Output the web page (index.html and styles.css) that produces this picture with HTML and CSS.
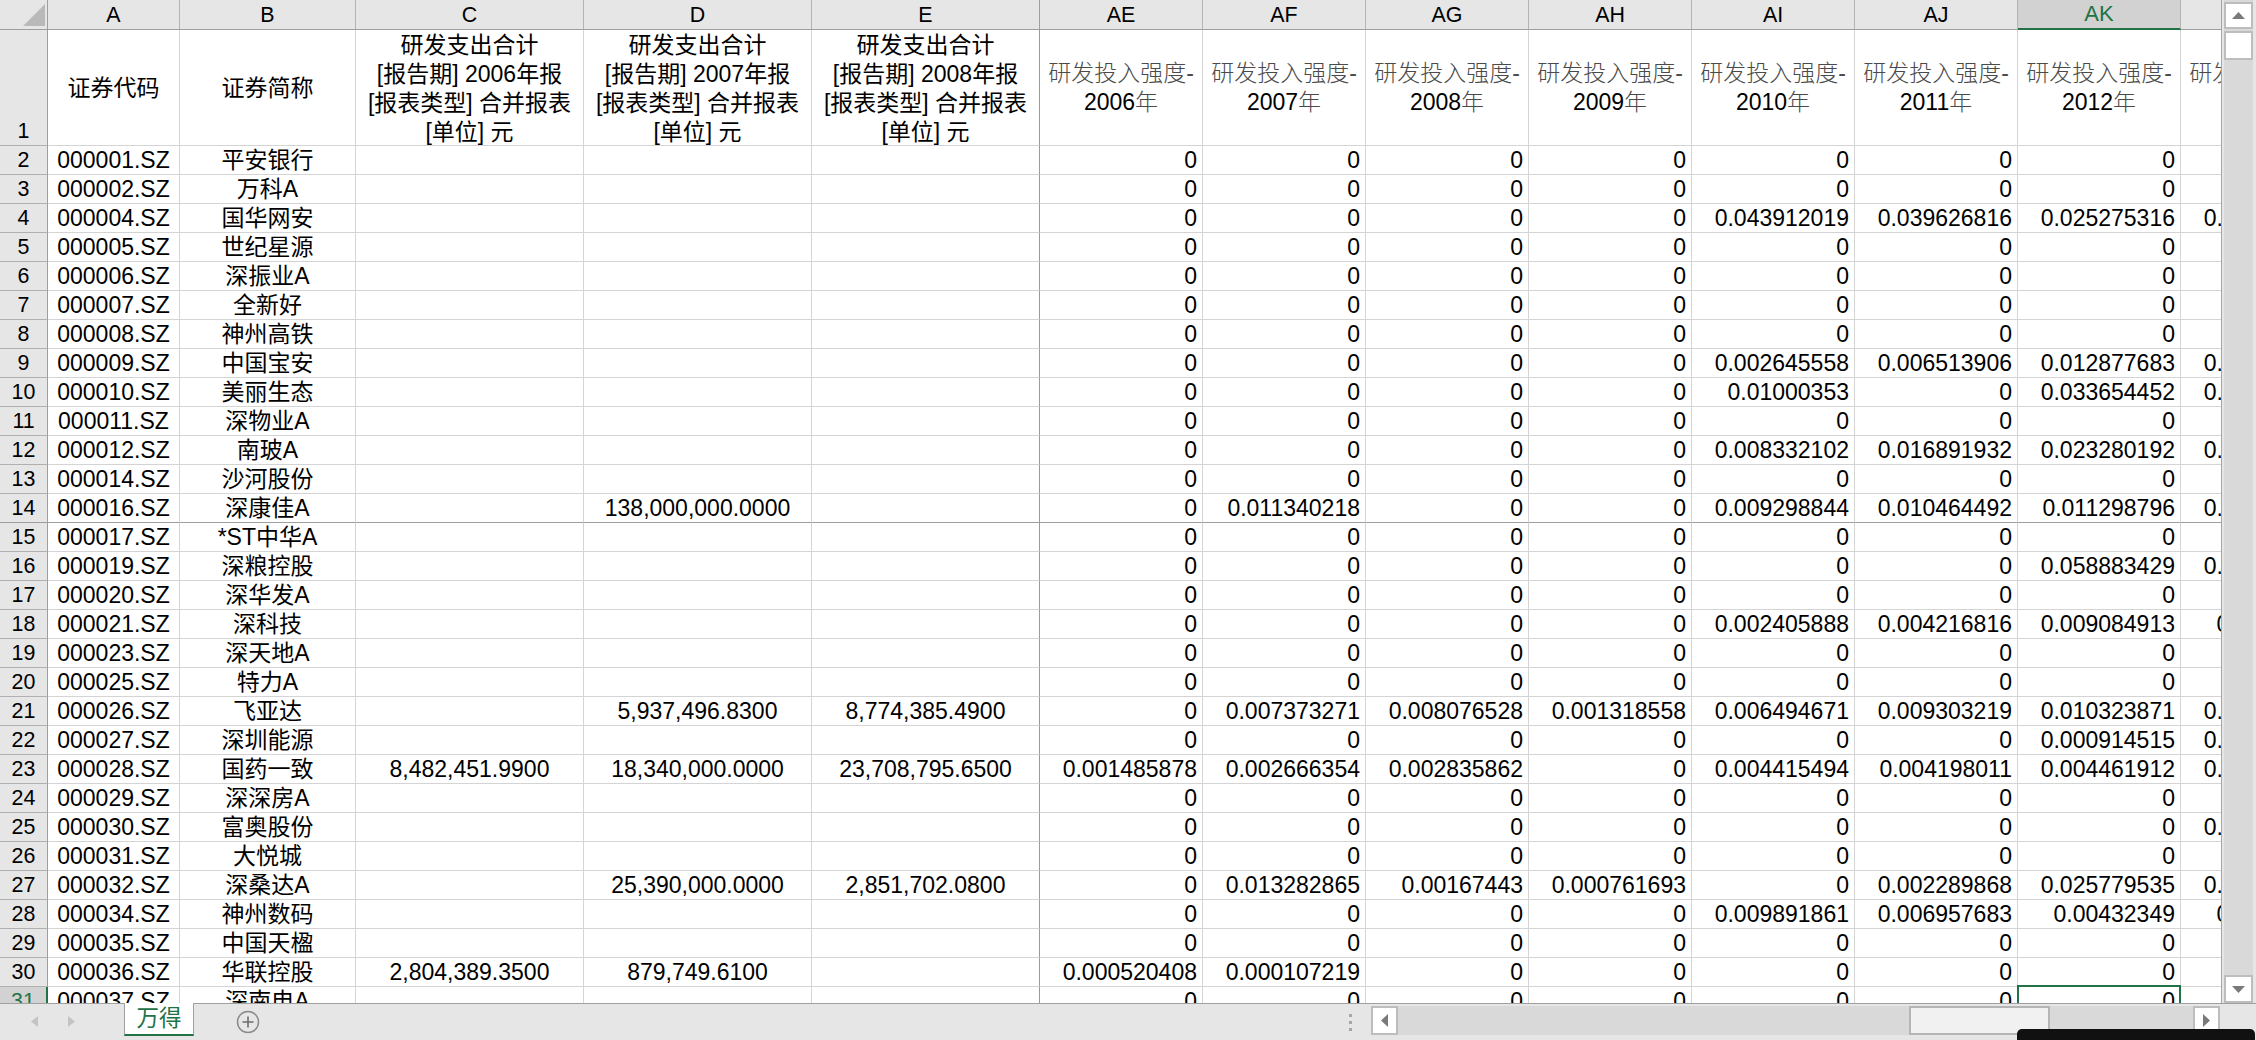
FILE: index.html
```html
<!DOCTYPE html>
<html lang="zh-CN">
<head>
<meta charset="utf-8">
<title>万得</title>
<link rel="stylesheet" href="styles.css">
</head>
<body>
<div class="main">
<div class="grid">
<table class="sheet">
<colgroup><col class="c-h"><col class="c-a"><col class="c-b"><col class="c-w"><col class="c-w"><col class="c-w"><col class="c-n"><col class="c-n"><col class="c-n"><col class="c-n"><col class="c-n"><col class="c-n"><col class="c-n"><col class="c-n"></colgroup>
<thead>
<tr class="letters"><th class="corner"><svg class="tri" width="22" height="22" viewBox="0 0 22 22"><path d="M22 0V22H0Z" fill="#b9b9b9"/></svg></th><th>A</th><th>B</th><th>C</th><th>D</th><th class="fz">E</th><th>AE</th><th>AF</th><th>AG</th><th>AH</th><th>AI</th><th>AJ</th><th class="cur">AK</th><th></th></tr>
</thead>
<tbody>
<tr class="head"><th>1</th><td>证券代码</td><td>证券简称</td><td><div class="tall">研发支出合计<br>[报告期] 2006年报<br>[报表类型] 合并报表<br>[单位] 元</div></td><td><div class="tall">研发支出合计<br>[报告期] 2007年报<br>[报表类型] 合并报表<br>[单位] 元</div></td><td class="fz"><div class="tall">研发支出合计<br>[报告期] 2008年报<br>[报表类型] 合并报表<br>[单位] 元</div></td><td class="lt"><span class="song">研发投入强度-</span><br>2006<span class="song">年</span></td><td class="lt"><span class="song">研发投入强度-</span><br>2007<span class="song">年</span></td><td class="lt"><span class="song">研发投入强度-</span><br>2008<span class="song">年</span></td><td class="lt"><span class="song">研发投入强度-</span><br>2009<span class="song">年</span></td><td class="lt"><span class="song">研发投入强度-</span><br>2010<span class="song">年</span></td><td class="lt"><span class="song">研发投入强度-</span><br>2011<span class="song">年</span></td><td class="lt"><span class="song">研发投入强度-</span><br>2012<span class="song">年</span></td><td class="lt"><span class="song">研发投入强度-</span><br>2013<span class="song">年</span></td></tr>
<tr><th>2</th><td>000001.SZ</td><td>平安银行</td><td></td><td></td><td class="fz"></td><td>0</td><td>0</td><td>0</td><td>0</td><td>0</td><td>0</td><td>0</td><td></td></tr>
<tr><th>3</th><td>000002.SZ</td><td>万科A</td><td></td><td></td><td class="fz"></td><td>0</td><td>0</td><td>0</td><td>0</td><td>0</td><td>0</td><td>0</td><td></td></tr>
<tr><th>4</th><td>000004.SZ</td><td>国华网安</td><td></td><td></td><td class="fz"></td><td>0</td><td>0</td><td>0</td><td>0</td><td>0.043912019</td><td>0.039626816</td><td>0.025275316</td><td>0.012345678</td></tr>
<tr><th>5</th><td>000005.SZ</td><td>世纪星源</td><td></td><td></td><td class="fz"></td><td>0</td><td>0</td><td>0</td><td>0</td><td>0</td><td>0</td><td>0</td><td></td></tr>
<tr><th>6</th><td>000006.SZ</td><td>深振业A</td><td></td><td></td><td class="fz"></td><td>0</td><td>0</td><td>0</td><td>0</td><td>0</td><td>0</td><td>0</td><td></td></tr>
<tr><th>7</th><td>000007.SZ</td><td>全新好</td><td></td><td></td><td class="fz"></td><td>0</td><td>0</td><td>0</td><td>0</td><td>0</td><td>0</td><td>0</td><td></td></tr>
<tr><th>8</th><td>000008.SZ</td><td>神州高铁</td><td></td><td></td><td class="fz"></td><td>0</td><td>0</td><td>0</td><td>0</td><td>0</td><td>0</td><td>0</td><td></td></tr>
<tr><th>9</th><td>000009.SZ</td><td>中国宝安</td><td></td><td></td><td class="fz"></td><td>0</td><td>0</td><td>0</td><td>0</td><td>0.002645558</td><td>0.006513906</td><td>0.012877683</td><td>0.012345678</td></tr>
<tr><th>10</th><td>000010.SZ</td><td>美丽生态</td><td></td><td></td><td class="fz"></td><td>0</td><td>0</td><td>0</td><td>0</td><td>0.01000353</td><td>0</td><td>0.033654452</td><td>0.012345678</td></tr>
<tr><th>11</th><td>000011.SZ</td><td>深物业A</td><td></td><td></td><td class="fz"></td><td>0</td><td>0</td><td>0</td><td>0</td><td>0</td><td>0</td><td>0</td><td></td></tr>
<tr><th>12</th><td>000012.SZ</td><td>南玻A</td><td></td><td></td><td class="fz"></td><td>0</td><td>0</td><td>0</td><td>0</td><td>0.008332102</td><td>0.016891932</td><td>0.023280192</td><td>0.012345678</td></tr>
<tr><th>13</th><td>000014.SZ</td><td>沙河股份</td><td></td><td></td><td class="fz"></td><td>0</td><td>0</td><td>0</td><td>0</td><td>0</td><td>0</td><td>0</td><td></td></tr>
<tr class="fzrow"><th>14</th><td>000016.SZ</td><td>深康佳A</td><td></td><td>138,000,000.0000</td><td class="fz"></td><td>0</td><td>0.011340218</td><td>0</td><td>0</td><td>0.009298844</td><td>0.010464492</td><td>0.011298796</td><td>0.012345678</td></tr>
<tr><th>15</th><td>000017.SZ</td><td>*ST中华A</td><td></td><td></td><td class="fz"></td><td>0</td><td>0</td><td>0</td><td>0</td><td>0</td><td>0</td><td>0</td><td></td></tr>
<tr><th>16</th><td>000019.SZ</td><td>深粮控股</td><td></td><td></td><td class="fz"></td><td>0</td><td>0</td><td>0</td><td>0</td><td>0</td><td>0</td><td>0.058883429</td><td>0.012345678</td></tr>
<tr><th>17</th><td>000020.SZ</td><td>深华发A</td><td></td><td></td><td class="fz"></td><td>0</td><td>0</td><td>0</td><td>0</td><td>0</td><td>0</td><td>0</td><td></td></tr>
<tr><th>18</th><td>000021.SZ</td><td>深科技</td><td></td><td></td><td class="fz"></td><td>0</td><td>0</td><td>0</td><td>0</td><td>0.002405888</td><td>0.004216816</td><td>0.009084913</td><td>0.01234567</td></tr>
<tr><th>19</th><td>000023.SZ</td><td>深天地A</td><td></td><td></td><td class="fz"></td><td>0</td><td>0</td><td>0</td><td>0</td><td>0</td><td>0</td><td>0</td><td></td></tr>
<tr><th>20</th><td>000025.SZ</td><td>特力A</td><td></td><td></td><td class="fz"></td><td>0</td><td>0</td><td>0</td><td>0</td><td>0</td><td>0</td><td>0</td><td></td></tr>
<tr><th>21</th><td>000026.SZ</td><td>飞亚达</td><td></td><td>5,937,496.8300</td><td class="fz">8,774,385.4900</td><td>0</td><td>0.007373271</td><td>0.008076528</td><td>0.001318558</td><td>0.006494671</td><td>0.009303219</td><td>0.010323871</td><td>0.012345678</td></tr>
<tr><th>22</th><td>000027.SZ</td><td>深圳能源</td><td></td><td></td><td class="fz"></td><td>0</td><td>0</td><td>0</td><td>0</td><td>0</td><td>0</td><td>0.000914515</td><td>0.012345678</td></tr>
<tr><th>23</th><td>000028.SZ</td><td>国药一致</td><td>8,482,451.9900</td><td>18,340,000.0000</td><td class="fz">23,708,795.6500</td><td>0.001485878</td><td>0.002666354</td><td>0.002835862</td><td>0</td><td>0.004415494</td><td>0.004198011</td><td>0.004461912</td><td>0.012345678</td></tr>
<tr><th>24</th><td>000029.SZ</td><td>深深房A</td><td></td><td></td><td class="fz"></td><td>0</td><td>0</td><td>0</td><td>0</td><td>0</td><td>0</td><td>0</td><td></td></tr>
<tr><th>25</th><td>000030.SZ</td><td>富奥股份</td><td></td><td></td><td class="fz"></td><td>0</td><td>0</td><td>0</td><td>0</td><td>0</td><td>0</td><td>0</td><td>0.012345678</td></tr>
<tr><th>26</th><td>000031.SZ</td><td>大悦城</td><td></td><td></td><td class="fz"></td><td>0</td><td>0</td><td>0</td><td>0</td><td>0</td><td>0</td><td>0</td><td></td></tr>
<tr><th>27</th><td>000032.SZ</td><td>深桑达A</td><td></td><td>25,390,000.0000</td><td class="fz">2,851,702.0800</td><td>0</td><td>0.013282865</td><td>0.00167443</td><td>0.000761693</td><td>0</td><td>0.002289868</td><td>0.025779535</td><td>0.012345678</td></tr>
<tr><th>28</th><td>000034.SZ</td><td>神州数码</td><td></td><td></td><td class="fz"></td><td>0</td><td>0</td><td>0</td><td>0</td><td>0.009891861</td><td>0.006957683</td><td>0.00432349</td><td>0.01234567</td></tr>
<tr><th>29</th><td>000035.SZ</td><td>中国天楹</td><td></td><td></td><td class="fz"></td><td>0</td><td>0</td><td>0</td><td>0</td><td>0</td><td>0</td><td>0</td><td></td></tr>
<tr><th>30</th><td>000036.SZ</td><td>华联控股</td><td>2,804,389.3500</td><td>879,749.6100</td><td class="fz"></td><td>0.000520408</td><td>0.000107219</td><td>0</td><td>0</td><td>0</td><td>0</td><td>0</td><td></td></tr>
<tr><th class="cur-row">31</th><td>000037.SZ</td><td>深南电A</td><td></td><td></td><td class="fz"></td><td>0</td><td>0</td><td>0</td><td>0</td><td>0</td><td>0</td><td class="sel">0</td><td></td></tr>
</tbody>
</table>
</div>
<div class="vbar">
<div class="btn btn-up"><svg width="13" height="7" viewBox="0 0 13 7"><path d="M6.5 0L13 7H0Z" fill="#7a7a7a"/></svg></div>
<div class="btn vthumb"></div>
<div class="vtrack"></div>
<div class="btn btn-down"><svg width="13" height="7" viewBox="0 0 13 7"><path d="M0 0H13L6.5 7Z" fill="#7a7a7a"/></svg></div>
</div>
</div>
<div class="bottom">
<div class="nav">
<svg width="7" height="11" viewBox="0 0 7 11"><path d="M7 0V11L0 5.5Z" fill="#c4c4c4"/></svg>
<svg width="7" height="11" viewBox="0 0 7 11"><path d="M0 0V11L7 5.5Z" fill="#c4c4c4"/></svg>
</div>
<div class="tab">万得</div>
<div class="add"><svg width="24" height="24" viewBox="0 0 24 24"><circle cx="12" cy="12" r="10.5" fill="none" stroke="#8a8a8a" stroke-width="1.5"/><path d="M12 6.5V17.5M6.5 12H17.5" stroke="#6f6f6f" stroke-width="1.6"/></svg></div>
<div class="spacer"></div>
<div class="dots"><i></i><i></i><i></i></div>
<div class="hbar">
<div class="btn hbtn"><svg width="7" height="13" viewBox="0 0 7 13"><path d="M7 0V13L0 6.5Z" fill="#7a7a7a"/></svg></div>
<div class="htrack"><div class="hthumb"></div></div>
<div class="btn hbtn"><svg width="7" height="13" viewBox="0 0 7 13"><path d="M0 0V13L7 6.5Z" fill="#7a7a7a"/></svg></div>
</div>
</div>
<div class="blackout"></div>
</body>
</html>
```
FILE: styles.css
```css
* { box-sizing: border-box; }
html, body { margin: 0; height: 100%; }
body {
  position: relative;
  display: flex;
  flex-direction: column;
  height: 1040px;
  overflow: hidden;
  background: #e6e6e6;
  font-family: "Liberation Sans", "Noto Sans CJK SC", sans-serif;
  color: #000;
}
.main { flex: 1 1 0; min-height: 0; display: flex; }
.grid {
  flex: 0 0 2222px;
  overflow: hidden;
  background: #fff;
  border-right: 1px solid #a6a6a6;
}
.sheet {
  table-layout: fixed;
  border-collapse: separate;
  border-spacing: 0;
  width: 2343px;
  font-size: 23px;
}
.c-h { width: 48px; }
.c-a { width: 132px; }
.c-b { width: 176px; }
.c-w { width: 228px; }
.c-n { width: 163px; }

.sheet th, .sheet td {
  height: 29px;
  padding: 0;
  line-height: 28px;
  white-space: nowrap;
  overflow: hidden;
  border-right: 1px solid #d4d4d4;
  border-bottom: 1px solid #d4d4d4;
}
.sheet td { text-align: center; vertical-align: bottom; }
.sheet td:nth-child(n+7) { text-align: right; padding-right: 5px; }

.sheet th {
  background: #e6e6e6;
  font-weight: 400;
  font-size: 21.4px;
  text-align: center;
  border-bottom-color: #b0b0b0;
  border-right: 1px solid #9e9e9e;
  vertical-align: bottom;
}
.letters th {
  border-right-color: #b4b4b4;
  border-bottom-color: #9e9e9e;
  vertical-align: middle;
}
.letters th:first-child { border-right-color: #9e9e9e; }
.letters th.fz { border-right-color: #9e9e9e; }
.corner { position: relative; }
.tri { position: absolute; left: 23px; top: 4px; }
.letters th.cur {
  background: #d2d2d2;
  color: #217346;
  font-size: 22px;
  border-bottom: 2px solid #217346;
}

.sheet .head td {
  height: 116px;
  line-height: 29px;
  vertical-align: middle;
  padding-top: 2px;
}
.tall { margin: -1px 0 -2px; }
.sheet .head td.lt { text-align: center; padding: 0; }
.song { font-weight: 300; color: #4a4a4a; }

.sheet td.fz { border-right-color: #9a9a9a; }
.fzrow th, .fzrow td { border-bottom-color: #9e9e9e; }
.sheet .fzrow td.fz { border-bottom-color: #9e9e9e; }
.sheet th.cur-row {
  background: #d2d2d2;
  color: #217346;
  border-right: 2px solid #217346;
}
.sheet td.sel { position: relative; overflow: visible; }
.sel::after {
  content: "";
  position: absolute;
  inset: -2px -1px -1px -1px;
  border: 2px solid #217346;
}

.vbar {
  flex: 0 0 29px;
  margin: 0 3px 0 2px;
  display: flex;
  flex-direction: column;
  background: #d9d9d9;
}
.btn {
  display: flex;
  align-items: center;
  justify-content: center;
  background: #fff;
  border: 2px solid #bdbdbd;
}
.btn-up { height: 27px; margin-top: 2px; }
.vthumb { height: 29px; margin-top: 2px; }
.vtrack { flex: 1; }
.btn-down { height: 28px; }

.bottom {
  flex: 0 0 36px;
  display: flex;
  align-items: flex-start;
  border-top: 1px solid #a0a0a0;
}
.nav {
  width: 124px;
  height: 36px;
  display: flex;
  align-items: center;
  gap: 30px;
  padding: 0 0 1px 31px;
}
.tab {
  width: 70px;
  height: 33px;
  margin-top: -1px;
  background: #fff;
  border-left: 1px solid #a0a0a0;
  border-right: 1px solid #a0a0a0;
  border-bottom: 2px solid #217346;
  color: #217346;
  font-size: 22.5px;
  line-height: 31px;
  text-align: center;
}
.add { margin: 6px 0 0 42px; height: 24px; }
.spacer { flex: 1; }
.dots {
  width: 3px;
  height: 17px;
  margin: 10px 19px 0 0;
  display: flex;
  flex-direction: column;
  justify-content: space-between;
}
.dots i { display: block; height: 3px; background: #a6a6a6; }
.hbar {
  width: 849px;
  height: 29px;
  margin: 2px 36px 0 0;
  display: flex;
  background: #d9d9d9;
}
.hbtn { flex: 0 0 27px; }
.htrack { flex: 1; }
.hthumb {
  width: 141px;
  height: 29px;
  margin-left: 511px;
  background: #f1f1f1;
  border: 2px solid #b5b5b5;
}
.blackout {
  position: absolute;
  right: 1px;
  bottom: 0;
  width: 238px;
  height: 11px;
  background: #111;
  border-radius: 5px 5px 0 0;
}
```
